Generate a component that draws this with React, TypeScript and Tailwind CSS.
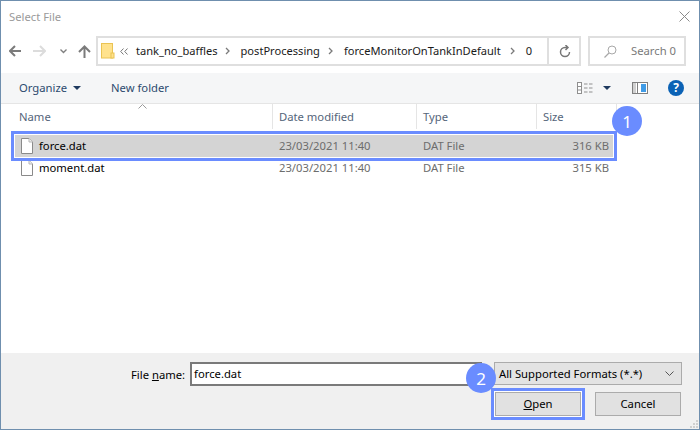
import React from "react";

function FileIcon() {
  return (
    <svg width="14" height="16" viewBox="0 0 14 16" className="shrink-0">
      <path d="M1.5 0.5H9L12.5 4V15.5H1.5Z" fill="#fff" stroke="#8a8a8a" />
      <path d="M9 0.5V4H12.5" fill="#f0f0f0" stroke="#b5b5b5" />
    </svg>
  );
}

function Sep() {
  return (
    <svg width="6" height="8" viewBox="0 0 6 8" className="block shrink-0">
      <path d="M1 1L4 4L1 7" fill="none" stroke="#7a7a7a" strokeWidth="1.3" />
    </svg>
  );
}

function Row({ name, size, selected }: { name: string; size: string; selected?: boolean }) {
  return (
    <div className={`flex h-[22px] items-center pb-[1px] ${selected ? "bg-[#d4d4d4]" : ""}`}>
      <div className="flex w-[264px] items-center pl-[5px]">
        <FileIcon />
        <span className="ml-[5px] text-black">{name}</span>
      </div>
      <span className="w-[144px] text-[#6d6d6d]">23/03/2021 11:40</span>
      <span className="w-[100px] text-[#6d6d6d]">DAT File</span>
      <span className="w-[86px] text-right text-[#6d6d6d]">{size}</span>
    </div>
  );
}

function Badge({ n, className }: { n: string; className: string }) {
  return (
    <div className={`absolute flex h-[30px] w-[30px] items-center justify-center rounded-full bg-[#6a8cff] text-[17px] text-white ${className}`}>
      {n}
    </div>
  );
}

export default function App() {
  return (
    <div className="relative flex h-[430px] w-[700px] flex-col overflow-hidden border border-[#6f8fae] bg-white font-['Noto_Sans',sans-serif] text-[11.25px] leading-none text-[#1a1a1a]">
      {/* Title bar */}
      <div className="flex h-[31px] shrink-0 items-center justify-between pl-[8px] pr-[9px]">
        <span className="text-[#9a9a9a]">Select File</span>
        <svg width="11" height="11" viewBox="0 0 11 11">
          <path d="M0.5 0.5L10.5 10.5M10.5 0.5L0.5 10.5" stroke="#8a8a8a" strokeWidth="1" />
        </svg>
      </div>

      {/* Address row */}
      <div className="flex h-[41px] shrink-0 items-start pt-[4px]">
        <div className="flex h-[30px] w-[95px] shrink-0 items-center">
          <svg width="13" height="12" viewBox="0 0 13 12" className="ml-[8px]">
            <path d="M12 6H1.5M6 1L1 6L6 11" fill="none" stroke="#7b7b7b" strokeWidth="2" />
          </svg>
          <svg width="13" height="12" viewBox="0 0 13 12" className="ml-[11px]">
            <path d="M0 6H11M7 1L12 6L7 11" fill="none" stroke="#dcdcdc" strokeWidth="2" />
          </svg>
          <svg width="7" height="5" viewBox="0 0 7 5" className="ml-[14px]">
            <path d="M0.5 0.5L3.5 3.5L6.5 0.5" fill="none" stroke="#808080" strokeWidth="1.4" />
          </svg>
          <svg width="13" height="13" viewBox="0 0 13 13" className="ml-[11px]">
            <path d="M6.5 13V2M1 7L6.5 1.5L12 7" fill="none" stroke="#7b7b7b" strokeWidth="2" />
          </svg>
        </div>
        <div className="flex h-[30px] w-[453px] shrink-0 items-center border-2 border-[#dfdfdf] text-[11.1px]">
          <svg width="14" height="16" viewBox="0 0 14 16" className="ml-[3px] shrink-0">
            <rect x="0.5" y="0.5" width="11" height="14.5" fill="#ffe28d" stroke="#eac353" />
            <rect x="10" y="10" width="3" height="5" fill="#ffe28d" stroke="#eac353" />
          </svg>
          <svg width="8" height="7" viewBox="0 0 8 7" className="ml-[5px] shrink-0">
            <path d="M3.5 0.5L0.7 3.5L3.5 6.5M7.5 0.5L4.7 3.5L7.5 6.5" fill="none" stroke="#777" />
          </svg>
          <span className="ml-[8px]">tank_no_baffles</span>
          <span className="ml-[7px]"><Sep /></span>
          <span className="ml-[10px]">postProcessing</span>
          <span className="ml-[8px]"><Sep /></span>
          <span className="ml-[10px]">forceMonitorOnTankInDefault</span>
          <span className="ml-[9px]"><Sep /></span>
          <span className="ml-[10px]">0</span>
        </div>
        <div className="-ml-[2px] flex h-[30px] w-[34px] shrink-0 items-center justify-center border-2 border-[#dfdfdf] pl-[2px]">
          <svg width="12" height="13" viewBox="0 0 12 13">
            <path d="M10.5 7A4.5 4.5 0 1 1 6 2.5H8M6.5 0L9 2.5L6.5 5" fill="none" stroke="#777" strokeWidth="1.5" />
          </svg>
        </div>
        <div className="ml-[7px] flex h-[30px] w-[98px] shrink-0 items-center border-2 border-[#dfdfdf] text-[#7a7a7a]">
          <svg width="13" height="13" viewBox="0 0 13 13" className="ml-[14px]">
            <circle cx="8" cy="5" r="4" fill="none" stroke="#a8a8a8" />
            <path d="M5 8L0.5 12.5" stroke="#a8a8a8" strokeWidth="1.2" />
          </svg>
          <span className="ml-[14px]">Search 0</span>
        </div>
      </div>

      {/* Toolbar */}
      <div className="flex h-[31px] shrink-0 items-center border-b border-[#e5e5e5] bg-[#f5f6f7] text-[#2c4a6e]">
        <span className="ml-[18px]">Organize</span>
        <svg width="8" height="4" viewBox="0 0 8 4" className="ml-[6px]">
          <path d="M0 0H8L4 4Z" fill="#1f3a5f" />
        </svg>
        <span className="ml-[30px]">New folder</span>
        <div className="flex-1" />
        <svg width="17" height="12" viewBox="0 0 17 12">
          <rect x="0.5" y="0.5" width="4" height="11" fill="#fff" stroke="#8f8f8f" />
          <path d="M0 4.5H5M0 8H5" stroke="#8f8f8f" />
          <path d="M7 2H16M7 6H16M7 10H16" stroke="#8f8f8f" strokeDasharray="3.5 1.5" />
        </svg>
        <svg width="8" height="4" viewBox="0 0 8 4" className="ml-[9px]">
          <path d="M0 0H8L4 4Z" fill="#1f3a5f" />
        </svg>
        <svg width="16" height="12" viewBox="0 0 16 12" className="ml-[21px]">
          <rect x="0.5" y="0.5" width="15" height="11" fill="#fff" stroke="#7f7f7f" />
          <rect x="1" y="1" width="3" height="10" fill="#d0d0d0" />
          <rect x="9" y="2" width="5" height="8" fill="#3f9be6" />
          <path d="M5.5 1V11" stroke="#7f7f7f" />
        </svg>
        <div className="ml-[20px] mr-[15px] flex h-[16px] w-[16px] items-center justify-center rounded-full bg-[#0b62b5] text-[12px] font-bold text-white">?</div>
      </div>

      {/* Column headers */}
      <div className="relative flex h-[25px] shrink-0 items-center text-[#54657a]">
        <span className="w-[271px] pl-[18px]">Name</span>
        <div className="h-[25px] w-px bg-[#e5e5e5]" />
        <span className="w-[143px] pl-[6px]">Date modified</span>
        <div className="h-[25px] w-px bg-[#e5e5e5]" />
        <span className="w-[119px] pl-[6px]">Type</span>
        <div className="h-[25px] w-px bg-[#e5e5e5]" />
        <span className="w-[79px] pl-[6px]">Size</span>
        <div className="h-[25px] w-px bg-[#e5e5e5]" />
        <svg width="9" height="5" viewBox="0 0 9 5" className="absolute left-[137px] top-0">
          <path d="M0.5 4.5L4.5 0.5L8.5 4.5" fill="none" stroke="#9a9a9a" />
        </svg>
      </div>

      {/* File list */}
      <div className="flex-1 pl-[14px] pt-[6px]">
        <div className="w-[600px]">
          <Row name="force.dat" size="316 KB" selected />
          <Row name="moment.dat" size="315 KB" />
        </div>
      </div>

      {/* Footer */}
      <div className="flex h-[76px] shrink-0 bg-[#f0f0f0]">
        <div className="flex w-[493px] items-start pt-[9px]">
          <span className="ml-[130px] mt-[7px] text-black">
            File <span className="underline">n</span>ame:
          </span>
          <div className="ml-[5px] flex h-[24px] w-[292px] items-center border-2 border-[#7a7a7a] bg-white pl-[2px] text-black">force.dat</div>
        </div>
        <div className="flex flex-col pt-[9px]">
          <div className="flex h-[23px] w-[188px] items-center justify-between border border-[#ababab] bg-[#e3e3e3] pl-[4px] pr-[7px] text-black">
            <span>All Supported Formats (*.*)</span>
            <svg width="9" height="5" viewBox="0 0 9 5">
              <path d="M0.5 0.5L4.5 4.5L8.5 0.5" fill="none" stroke="#555" />
            </svg>
          </div>
          <div className="mt-[7px] flex pl-[1px] text-black">
            <div className="flex h-[24px] w-[86px] items-center justify-center border border-[#ababab] bg-[#e1e1e1]">
              <span><span className="underline">O</span>pen</span>
            </div>
            <div className="ml-[14px] flex h-[24px] w-[86px] items-center justify-center border border-[#ababab] bg-[#e1e1e1]">Cancel</div>
          </div>
        </div>
      </div>

      {/* Annotations */}
      <div className="absolute left-[10px] top-[130px] h-[30px] w-[606px] border-[3px] border-[#6a8cff]">
        <div className="h-full w-full border border-white" />
      </div>
      <div className="absolute left-[490px] top-[387px] h-[32px] w-[94px] border-[3px] border-[#6a8cff]">
        <div className="h-full w-full border border-white" />
      </div>
      <Badge n="1" className="left-[611px] top-[105px]" />
      <Badge n="2" className="left-[465px] top-[362px]" />

      <svg width="10" height="10" viewBox="0 0 10 10" className="absolute bottom-0 right-0">
        <path d="M7 1h2v2H7zM4 4h2v2H4zM7 4h2v2H7zM1 7h2v2H1zM4 7h2v2H4zM7 7h2v2H7z" fill="#cfcfcf" />
      </svg>
    </div>
  );
}
